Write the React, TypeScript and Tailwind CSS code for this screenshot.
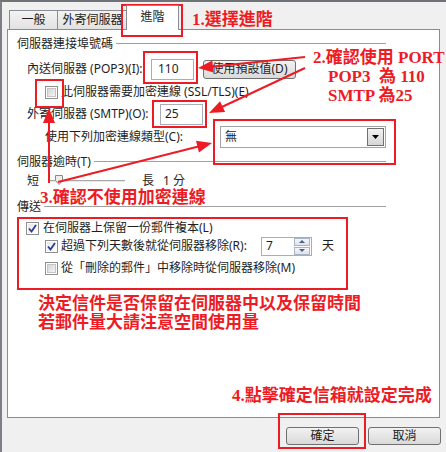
import React from "react";

const RED = "#ed1c24";

function Arrow({ x1, y1, x2, y2 }: { x1: number; y1: number; x2: number; y2: number }) {
  const dx = x2 - x1;
  const dy = y2 - y1;
  const L = Math.hypot(dx, dy);
  const ux = dx / L;
  const uy = dy / L;
  const len = 15;
  const hw = 6;
  const bx = x2 - ux * len;
  const by = y2 - uy * len;
  const px = -uy;
  const py = ux;
  const pts = `${x2},${y2} ${bx + px * hw},${by + py * hw} ${bx - px * hw},${by - py * hw}`;
  return (
    <g>
      <line x1={x1} y1={y1} x2={bx + ux * 2} y2={by + uy * 2} stroke={RED} strokeWidth={2} />
      <polygon points={pts} fill={RED} />
    </g>
  );
}

function Checkbox({ checked }: { checked?: boolean }) {
  return (
    <span className="relative flex h-[13px] w-[13px] shrink-0 items-center justify-center border border-[#8f8f8f] bg-white">
      {checked ? (
        <>
          <span className="absolute inset-[1px] bg-gradient-to-br from-[#e6e6e6] to-[#ffffff]" />
          <svg width="11" height="11" viewBox="0 0 11 11" className="relative">
            <path d="M2 5.5 L4.5 8.5 L9 2" fill="none" stroke="#2a3c8c" strokeWidth="1.8" />
          </svg>
        </>
      ) : (
        <span className="h-[9px] w-[9px] border border-[#c4c4c4] bg-gradient-to-br from-[#d6d6d6] to-[#f4f4f4]" />
      )}
    </span>
  );
}

function Group({ label, className }: { label: string; className: string }) {
  return (
    <div className={"flex h-[16px] items-center pl-[9px] pr-[53px] " + className}>
      <span className="leading-[16px]">{label}</span>
      <div className="ml-[3px] h-[2px] flex-1 border-t border-b border-t-[#a0a0a0] border-b-white" />
    </div>
  );
}

function Box({ l, t, w, h }: { l: number; t: number; w: number; h: number }) {
  return (
    <div
      className="pointer-events-none absolute border-2 border-[#ed1c24]"
      style={{ left: l, top: t, width: w, height: h }}
    />
  );
}

export default function App() {
  return (
    <div className="relative h-[452px] w-[446px] overflow-hidden border-l-2 border-t-2 border-l-[#7c7f84] border-t-[#6f7378] bg-[#f0f0f0] font-['Noto_Sans','Noto_Sans_CJK_TC',sans-serif] text-[12px] text-[#1e1e1e]">
      {/* Tabs */}
      <div className="flex h-[27px] items-end pl-[7px]">
        <div className="flex h-[19px] w-[49px] items-center justify-center border border-b-0 border-[#898c95] bg-gradient-to-b from-[#f3f3f3] to-[#e2e2e2] leading-none">
          一般
        </div>
        <div className="ml-[-1px] flex h-[19px] w-[71px] items-center justify-center border border-b-0 border-[#898c95] bg-gradient-to-b from-[#f3f3f3] to-[#e2e2e2] leading-none">
          外寄伺服器
        </div>
        <div className="relative z-10 mb-[-1px] ml-[-2px] flex h-[25px] w-[53px] items-start justify-center border border-b-0 border-[#898c95] bg-white pt-[5px] leading-none">
          進階
        </div>
      </div>

      {/* Panel */}
      <div className="ml-[5px] h-[389px] w-[433px] border border-[#898c95] bg-white">
        <div className="pt-[6px]">
          <Group label="伺服器連接埠號碼" className="" />

          <div className="mt-[6px] flex h-[22px] items-center pl-[19px]">
            <span className="w-[124px] shrink-0 whitespace-nowrap">內送伺服器 (POP3)(I):</span>
            <div className="flex h-[21px] w-[43px] items-center border border-[#abadb3] pl-[6px]">110</div>
            <div className="ml-[9px] flex h-[19px] w-[93px] items-center justify-center rounded-[3px] border border-[#707070] bg-gradient-to-b from-[#f2f2f2] to-[#dadada]">
              使用預設值(D)
            </div>
          </div>

          <div className="mt-[4px] flex h-[16px] items-center pl-[37px]">
            <Checkbox />
            <span className="ml-[3px] whitespace-nowrap">此伺服器需要加密連線 (SSL/TLS)(E)</span>
          </div>

          <div className="mt-[3px] flex h-[22px] items-center pl-[19px]">
            <span className="w-[133px] shrink-0 whitespace-nowrap">外寄伺服器 (SMTP)(O):</span>
            <div className="flex h-[21px] w-[43px] items-center border border-[#abadb3] pl-[4px]">25</div>
          </div>

          <div className="mt-[1px] flex h-[22px] items-center pl-[37px]">
            <span className="w-[175px] shrink-0 whitespace-nowrap">使用下列加密連線類型(C):</span>
            <div className="flex h-[22px] w-[166px] items-center justify-between border border-[#a5a5a5] pl-[4px] pr-[1px]">
              <span>無</span>
              <div className="flex h-[18px] w-[17px] items-center justify-center border border-[#707070] bg-gradient-to-b from-[#f2f2f2] to-[#d6d6d6]">
                <svg width="7" height="4" viewBox="0 0 7 4">
                  <path d="M0 0 H7 L3.5 4 Z" fill="#000" />
                </svg>
              </div>
            </div>
          </div>

          <Group label="伺服器逾時(T)" className="mt-[6px]" />

          <div className="mt-[3px] flex h-[16px] items-center pl-[19px]">
            <span>短</span>
            <div className="relative ml-[11px] h-[2px] w-[75px] border-t border-b border-t-[#a8a8a8] border-b-[#e8e8e8]">
              <svg width="8" height="10" viewBox="0 0 8 10" className="absolute left-[5px] top-[-6px]">
                <path d="M0.5 0.5 H7.5 V5.5 L4 9.5 L0.5 5.5 Z" fill="#eeeeee" stroke="#8a8a8a" />
              </svg>
            </div>
            <span className="ml-[17px]">長</span>
            <span className="ml-[9px]">1 分</span>
          </div>

          <Group label="傳送" className="mt-[10px]" />

          <div className="mt-[5px] flex h-[16px] items-center pl-[18px]">
            <Checkbox checked />
            <span className="ml-[4px] whitespace-nowrap">在伺服器上保留一份郵件複本(L)</span>
          </div>

          <div className="flex h-[20px] items-center pl-[37px]">
            <Checkbox checked />
            <span className="ml-[3px] w-[200px] shrink-0 whitespace-nowrap">超過下列天數後就從伺服器移除(R):</span>
            <div className="flex h-[19px] w-[51px] items-center justify-between border border-[#abadb3] pl-[4px] pr-[1px]">
              <span>7</span>
              <div className="flex h-[17px] w-[16px] flex-col">
                <div className="flex h-[8px] items-center justify-center border border-[#a9b4c4] bg-gradient-to-b from-[#f4f6f9] to-[#dde3ec]">
                  <svg width="6" height="3" viewBox="0 0 6 3">
                    <path d="M0 3 H6 L3 0 Z" fill="#4d6185" />
                  </svg>
                </div>
                <div className="mt-[1px] flex h-[8px] items-center justify-center border border-[#a9b4c4] bg-gradient-to-b from-[#f4f6f9] to-[#dde3ec]">
                  <svg width="6" height="3" viewBox="0 0 6 3">
                    <path d="M0 0 H6 L3 3 Z" fill="#4d6185" />
                  </svg>
                </div>
              </div>
            </div>
            <span className="ml-[10px]">天</span>
          </div>

          <div className="mt-[4px] flex h-[16px] items-center pl-[37px]">
            <Checkbox />
            <span className="ml-[3px] whitespace-nowrap">從「刪除的郵件」中移除時從伺服器移除(M)</span>
          </div>
        </div>
      </div>

      {/* Buttons */}
      <div className="mt-[9px] flex justify-end gap-[9px] pr-[5px]">
        <div className="flex h-[18px] w-[73px] items-center justify-center rounded-[3px] border border-[#707070] bg-gradient-to-b from-[#f2f2f2] to-[#d9d9d9]">
          確定
        </div>
        <div className="flex h-[18px] w-[73px] items-center justify-center rounded-[3px] border border-[#707070] bg-gradient-to-b from-[#f2f2f2] to-[#d9d9d9]">
          取消
        </div>
      </div>

      {/* Annotations */}
      <div className="pointer-events-none absolute left-[-2px] top-[-2px] h-[452px] w-[446px] font-['Liberation_Serif','Noto_Sans_CJK_TC',serif] text-[17px] font-bold leading-[19px] text-[#ed1c24]">
        <Box l={121} t={4} w={62} h={33} />
        <Box l={143} t={51} w={55} h={33} />
        <Box l={35} t={79} w={29} h={29} />
        <Box l={152} t={100} w={55} h={28} />
        <Box l={213} t={119} w={183} h={46} />
        <Box l={17} t={217} w={331} h={73} />
        <Box l={278} t={413} w={88} h={36} />

        <div className="absolute left-[192px] top-[10px] whitespace-nowrap">1.選擇進階</div>
        <div className="absolute left-[313px] top-[48px] whitespace-pre">
          {"2.確認使用 PORT\n"}
          <span className="ml-[15px]">{"POP3  為 110"}</span>
          {"\n"}
          <span className="ml-[15px]">{"SMTP 為25"}</span>
        </div>
        <div className="absolute left-[40px] top-[188px] whitespace-nowrap">3.確認不使用加密連線</div>
        <div className="absolute left-[38px] top-[294px] whitespace-nowrap">
          決定信件是否保留在伺服器中以及保留時間
          <br />
          若郵件量大請注意空間使用量
        </div>
        <div className="absolute left-[232px] top-[386px] whitespace-nowrap">4.點擊確定信箱就設定完成</div>

        <svg width="446" height="452" className="absolute left-0 top-0">
          <Arrow x1={305} y1={57} x2={198} y2={68} />
          <Arrow x1={305} y1={68} x2={209} y2={113} />
          <Arrow x1={58} y1={182} x2={212} y2={143} />
          <Arrow x1={49} y1={183} x2={49} y2={108} />
        </svg>
      </div>
    </div>
  );
}
